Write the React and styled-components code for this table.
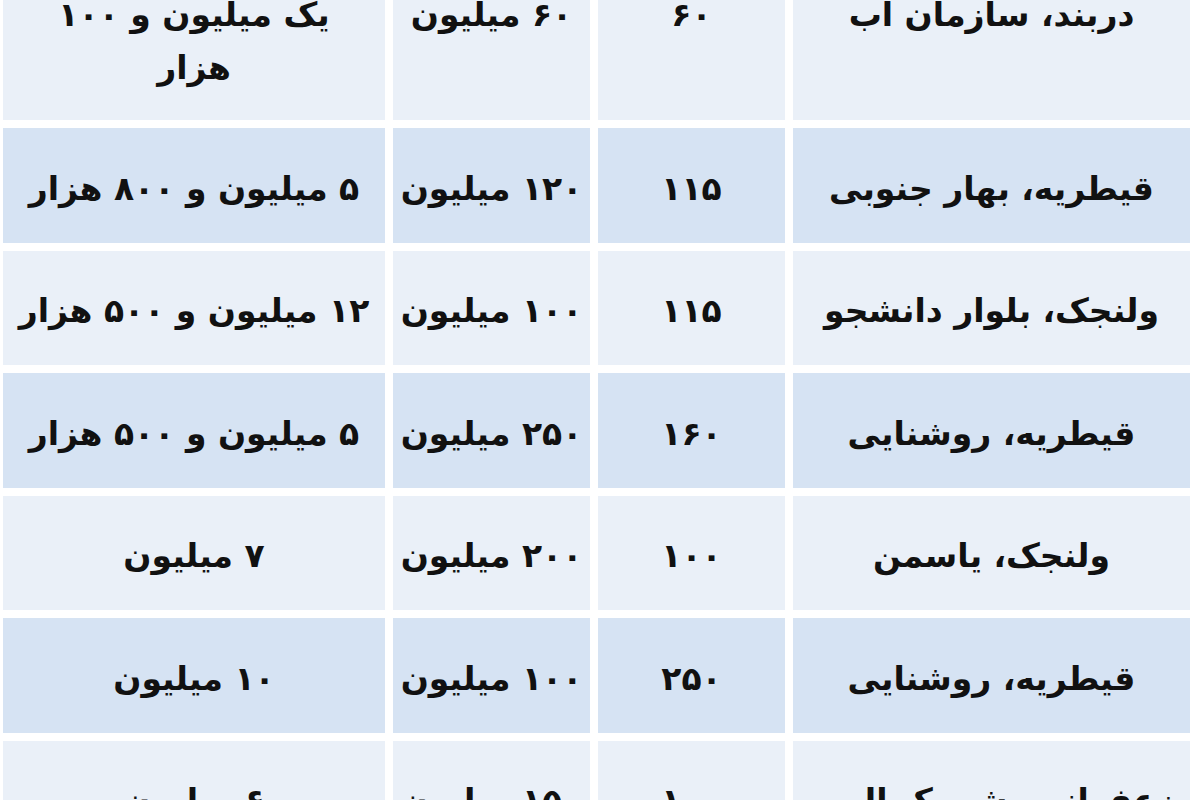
import React from "react";
import styled, { createGlobalStyle } from "styled-components";

const Global = createGlobalStyle`
  html, body { margin: 0; padding: 0; background: #ffffff; }
  body { font-family: "DejaVu Sans", sans-serif; }
`;

const Viewport = styled.div`
  width: 1200px;
  height: 800px;
  overflow: hidden;
  background: #ffffff;
`;

const Table = styled.div`
  direction: rtl;
  display: flex;
  flex-direction: column;
  gap: 8px;
  margin-top: -50px;
  padding: 0 10px 0 3px;
`;

const Row = styled.div`
  display: grid;
  grid-template-columns: 397px 187px 197px 382px;
  column-gap: 8px;
  height: ${(p) => (p.$tall ? "170px" : "114.5px")};
`;

const Cell = styled.div`
  background: ${(p) => (p.$dark ? "#d6e3f3" : "#eaf0f8")};
  display: flex;
  flex-direction: column;
  align-items: center;
  justify-content: ${(p) => (p.$top ? "flex-start" : "center")};
  padding-top: ${(p) => (p.$top ? "38px" : "6px")};
  box-sizing: border-box;
  color: #111;
  font-family: "DejaVu Sans", sans-serif;
  font-weight: 700;
  font-size: 33px;
  line-height: 53px;
  text-align: center;
  white-space: nowrap;
  overflow: hidden;
`;

const rows = [
  ["دربند، سازمان آب", "۶۰", "۶۰ میلیون", ["یک میلیون و ۱۰۰", "هزار"]],
  ["قیطریه، بهار جنوبی", "۱۱۵", "۱۲۰ میلیون", ["۵ میلیون و  ۸۰۰ هزار"]],
  ["ولنجک، بلوار دانشجو", "۱۱۵", "۱۰۰ میلیون", ["۱۲ میلیون و ۵۰۰ هزار"]],
  ["قیطریه، روشنایی", "۱۶۰", "۲۵۰ میلیون", ["۵ میلیون و ۵۰۰ هزار"]],
  ["ولنجک، یاسمن", "۱۰۰", "۲۰۰ میلیون", ["۷ میلیون"]],
  ["قیطریه، روشنایی", "۲۵۰", "۱۰۰ میلیون", ["۱۰ میلیون"]],
  ["زعفرانیه، شهرک الهیه", "۱۰۰", "۱۵۰ میلیون", ["۶ میلیون"]],
];

export default function App() {
  return (
    <Viewport>
      <Global />
      <Table>
        {rows.map((r, i) => {
          const dark = i % 2 === 1;
          const top = i === 0;
          return (
            <Row key={i} $tall={top}>
              <Cell $dark={dark} $top={top}>{r[0]}</Cell>
              <Cell $dark={dark} $top={top}>{r[1]}</Cell>
              <Cell $dark={dark} $top={top}>{r[2]}</Cell>
              <Cell $dark={dark} $top={top}>
                {r[3].map((line, j) => (
                  <span key={j}>{line}</span>
                ))}
              </Cell>
            </Row>
          );
        })}
      </Table>
    </Viewport>
  );
}
